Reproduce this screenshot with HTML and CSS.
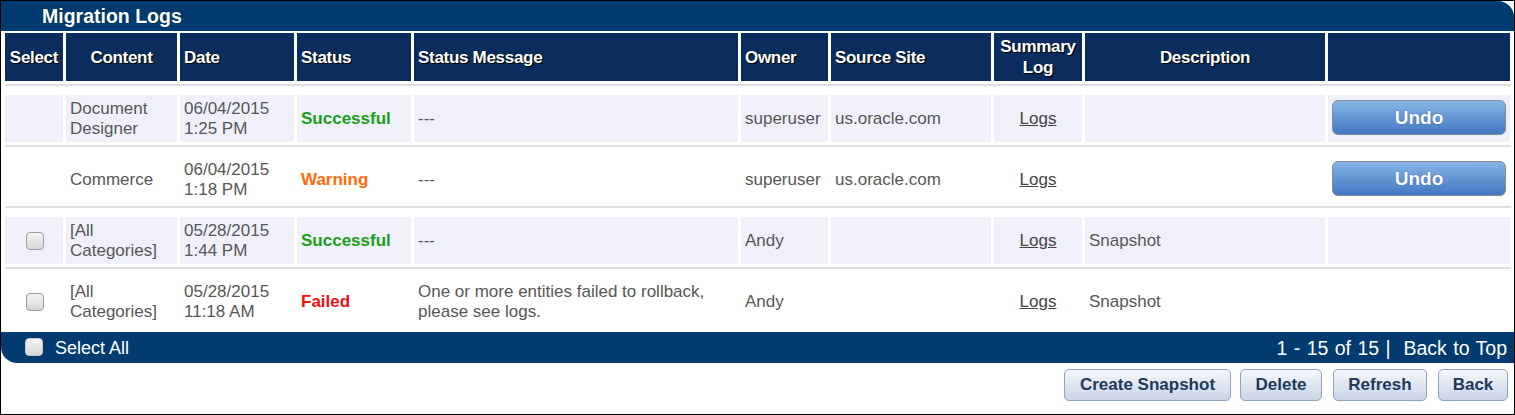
FILE: index.html
```html
<!DOCTYPE html>
<html>
<head>
<meta charset="utf-8">
<link rel="stylesheet" href="styles.css">
</head>
<body>
<div class="frame">
  <div class="titlebar">Migration Logs</div>

  <div class="grid head">
    <div class="hc center">Select</div>
    <div class="hc center">Content</div>
    <div class="hc">Date</div>
    <div class="hc">Status</div>
    <div class="hc">Status Message</div>
    <div class="hc">Owner</div>
    <div class="hc">Source Site</div>
    <div class="hc center">Summary<br>Log</div>
    <div class="hc center">Description</div>
    <div class="hc"></div>
  </div>
  <div class="sep"></div>

  <div class="grid row odd">
    <div class="c"></div>
    <div class="c">Document<br>Designer</div>
    <div class="c">06/04/2015<br>1:25 PM</div>
    <div class="c ok">Successful</div>
    <div class="c">---</div>
    <div class="c">superuser</div>
    <div class="c">us.oracle.com</div>
    <div class="c center"><a class="link">Logs</a></div>
    <div class="c"></div>
    <div class="c btncell"><span class="undo">Undo</span></div>
  </div>
  <div class="sep"></div>

  <div class="grid row">
    <div class="c"></div>
    <div class="c">Commerce</div>
    <div class="c">06/04/2015<br>1:18 PM</div>
    <div class="c warn">Warning</div>
    <div class="c">---</div>
    <div class="c">superuser</div>
    <div class="c">us.oracle.com</div>
    <div class="c center"><a class="link">Logs</a></div>
    <div class="c"></div>
    <div class="c btncell"><span class="undo">Undo</span></div>
  </div>
  <div class="sep"></div>

  <div class="grid row odd">
    <div class="c center"><span class="cb"></span></div>
    <div class="c">[All<br>Categories]</div>
    <div class="c">05/28/2015<br>1:44 PM</div>
    <div class="c ok">Successful</div>
    <div class="c">---</div>
    <div class="c">Andy</div>
    <div class="c"></div>
    <div class="c center"><a class="link">Logs</a></div>
    <div class="c">Snapshot</div>
    <div class="c"></div>
  </div>
  <div class="sep"></div>

  <div class="grid row">
    <div class="c center"><span class="cb"></span></div>
    <div class="c">[All<br>Categories]</div>
    <div class="c">05/28/2015<br>11:18 AM</div>
    <div class="c fail">Failed</div>
    <div class="c">One or more entities failed to rollback,<br>please see logs.</div>
    <div class="c">Andy</div>
    <div class="c"></div>
    <div class="c center"><a class="link">Logs</a></div>
    <div class="c">Snapshot</div>
    <div class="c"></div>
  </div>

  <div class="footer">
    <div class="selall"><span class="cb fcb"></span><span>Select All</span></div>
    <div class="pager">1 - 15 of 15 |&nbsp; Back to Top</div>
  </div>

  <div class="actions">
    <span class="btn b-snap">Create Snapshot</span>
    <span class="btn b-del">Delete</span>
    <span class="btn b-ref">Refresh</span>
    <span class="btn b-back">Back</span>
  </div>
</div>
</body>
</html>
```

FILE: styles.css
```css
* { box-sizing: border-box; }
html, body { margin: 0; padding: 0; background: #fff; }
body { font-family: "Liberation Sans", Arial, sans-serif; }

.frame {
  width: 1515px;
  height: 415px;
  border: 1px solid #000;
  overflow: hidden;
}

.titlebar {
  height: 30px;
  background: #013b6f;
  color: #fff;
  font-weight: bold;
  font-size: 19.5px;
  line-height: 30px;
  padding-left: 41px;
  border-top-right-radius: 16px;
  text-shadow: 0 0 1px #001a33;
}

.grid {
  display: grid;
  grid-template-columns: 58px 111px 114px 114px 324px 87px 160px 88px 240px 182px;
  column-gap: 3px;
  margin-left: 4px;
  margin-right: 3px;
}

.head { margin-top: 2px; }
.hc {
  height: 48px;
  background: #0a2d5d;
  color: #fff;
  font-weight: bold;
  font-size: 17px;
  line-height: 21px;
  display: flex;
  align-items: center;
  padding-left: 4px;
  letter-spacing: -0.3px;
  text-shadow: 1px 1px 1px #000;
}
.hc.center { justify-content: center; text-align: center; padding-left: 0; }

.sep {
  height: 2px;
  margin: 3px 3px 0 4px;
  background: #e0e0e0;
}

.row { margin-top: 9px; }
.c {
  height: 47px;
  display: flex;
  align-items: center;
  padding-left: 4px;
  font-size: 17px;
  line-height: 20px;
  color: #575757;
}
.odd .c { background: #f0f0fb; }
.c.center { justify-content: center; padding-left: 0; }

.ok { color: #1a9f1a; font-weight: bold; }
.warn { color: #ff6a0a; font-weight: bold; }
.fail { color: #ee1111; font-weight: bold; }

.link { color: #444; text-decoration: underline; }

.btncell { padding-left: 4px; }
.undo {
  display: flex;
  align-items: center;
  justify-content: center;
  width: 174px;
  height: 35px;
  margin-top: -2px;
  border: 1px solid #848c9a;
  border-radius: 6px;
  background: linear-gradient(#88b6e4, #5f92d2 55%, #4677c4);
  color: #fff;
  font-weight: bold;
  font-size: 19px;
  text-shadow: 0 0 1px #2a4f8a;
}

.cb {
  display: inline-block;
  width: 18px;
  height: 18px;
  border: 1px solid #9c9c9c;
  border-radius: 4px;
  background: linear-gradient(#f5f5f5, #d6d6d6);
  margin-left: 2px;
}

.footer {
  margin-top: 7px;
  height: 31px;
  background: #013b6f;
  border-bottom-left-radius: 16px;
  display: flex;
  align-items: center;
  justify-content: space-between;
  color: #fff;
  font-size: 18px;
  padding: 0 7px 0 24px;
}
.selall { display: flex; align-items: center; gap: 12px; margin-top: 2px; }
.fcb { margin-left: 0; margin-top: -4px; border-color: #c8c8c8; }
.pager { margin-top: 2px; font-size: 19.5px; word-spacing: 1px; }

.actions {
  display: flex;
  justify-content: flex-end;
  margin-top: 6px;
  padding-right: 6px;
}
.btn {
  display: inline-flex;
  align-items: center;
  justify-content: center;
  height: 32px;
  border: 1px solid #8ea2c2;
  border-radius: 5px;
  background: linear-gradient(#f6f8fc, #dfe6f1 50%, #c9d4e6);
  color: #22395a;
  font-weight: bold;
  font-size: 17px;
}
.b-snap { width: 167px; }
.b-del { width: 82px; margin-left: 9px; }
.b-ref { width: 94px; margin-left: 11px; }
.b-back { width: 70px; margin-left: 11px; }
```
